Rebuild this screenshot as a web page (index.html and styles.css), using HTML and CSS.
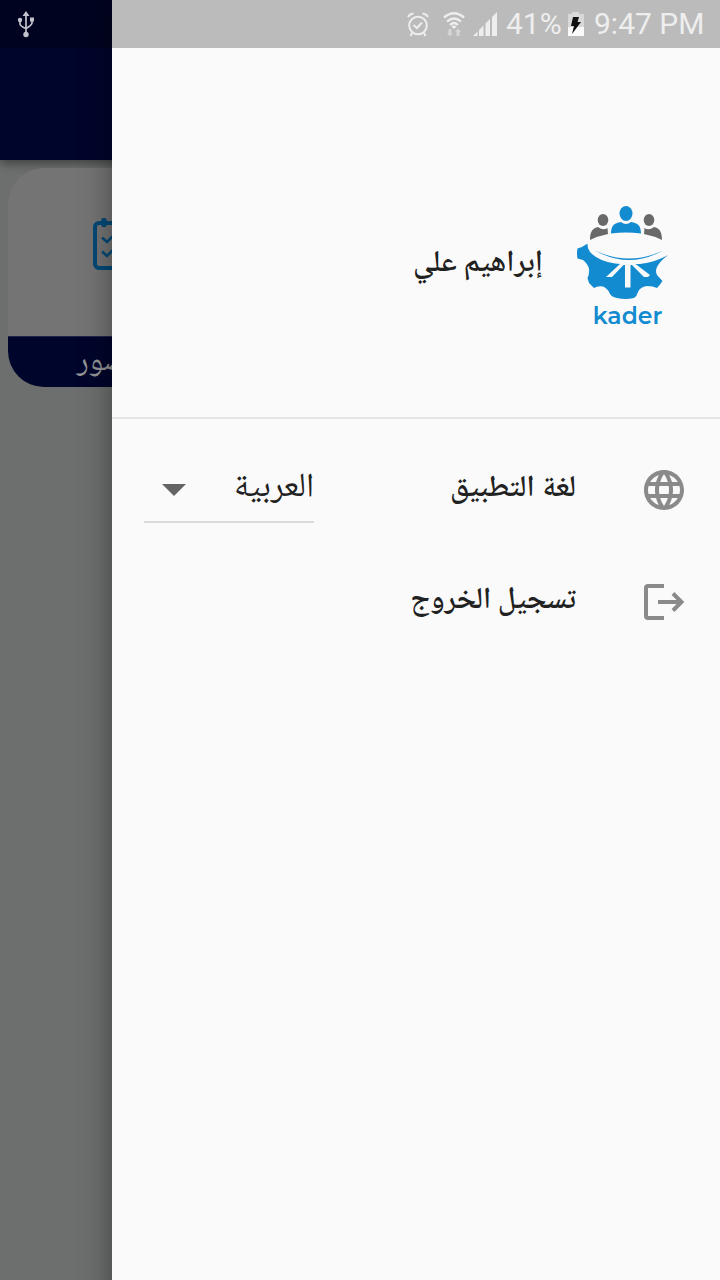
FILE: index.html
```html
<!DOCTYPE html>
<html lang="ar" dir="rtl">
<head>
<meta charset="utf-8">
<title>kader</title>
<link rel="stylesheet" href="styles.css">
</head>
<body>
<div class="screen">
  <main class="page">
    <div class="appbar"></div>
    <section class="card">
      <div class="card-body">
        <svg class="card-icon" viewBox="0 0 48 54" fill="none" stroke="#034976" stroke-width="4">
          <rect x="2" y="5" width="44" height="45" rx="4"/>
          <path d="M9 19.500l5 4.500 8-8M9 33.500l5 4.500 8-8" stroke-width="2.500"/>
          <path d="M11 2.500v4M37 2.500v4" stroke-width="5.500" stroke-linecap="round"/>
        </svg>
      </div>
      <div class="card-label"><span>الحضور</span></div>
    </section>
  </main>

  <aside class="drawer">
    <header class="profile">
      <svg class="logo" viewBox="0 0 115 140">
        <g fill="#138bd1">
          <ellipse cx="61" cy="18.500" rx="6.500" ry="7.500"/>
          <path d="M46 38.500C46 31 49 28 56 27Q61 31 66 27C73 28 76 31 76 38.500Q61 36.500 46 38.500Z"/>
          <path d="M22.500 48.500Q18 52 12.500 53.500Q11.500 58 12.500 63.500L18 65Q23 69 24 74Q24.500 79 22.500 83L24 88L29 93Q33 90.500 38 91.500Q43 94 44.500 98Q46 102 52 103Q60 105 69 103Q72 101 73 97Q75 92 82 91Q88 91 92 93Q95 90 97.500 86L92 80Q90 76 92 72Q95 66 103 60Q91 67 75 69L70.500 69L85 80L83 82H79L67 70H65.500V92.500H60V70H58.500L47 82H41L55 69L50 68.500Q33 66 25 57Q22 53 22.500 48.500Z"/>
          <path d="M30 55.500Q64 71.500 98 55.500Q64 74.500 30 55.500Z"/>
        </g>
        <g fill="#696969">
          <ellipse cx="38" cy="25" rx="5.300" ry="6"/>
          <path d="M25 45C25 36 28 33 33 32Q38 36 42.500 33L43 39Q33 41 25 45Z"/>
          <ellipse cx="84" cy="25" rx="5.300" ry="6"/>
          <path d="M97 45C97 36 94 33 89 32Q84 36 79.500 33L79 39Q89 41 97 45Z"/>
        </g>
      </svg>
      <div class="brand" dir="ltr">kader</div>
      <div class="name"><span>إبراهيم علي</span></div>
    </header>
    <nav class="menu">
      <div class="row">
        <svg class="icon" viewBox="0 0 24 24" fill="#8a8a8a"><path d="M11.990 2C6.470 2 2 6.480 2 12s4.470 10 9.990 10C17.520 22 22 17.520 22 12S17.520 2 11.990 2zm6.930 6h-2.950c-.320-1.250-.780-2.450-1.380-3.560 1.840.630 3.370 1.910 4.330 3.560zM12 4.040c.830 1.200 1.480 2.530 1.910 3.960h-3.820c.430-1.430 1.080-2.760 1.910-3.960zM4.260 14C4.100 13.360 4 12.690 4 12s.100-1.360.260-2h3.380c-.080.660-.140 1.320-.140 2s.060 1.340.140 2H4.260zm.820 2h2.950c.320 1.250.780 2.450 1.380 3.560-1.840-.630-3.370-1.900-4.330-3.560zm2.950-8H5.080c.960-1.660 2.490-2.930 4.330-3.560C8.810 5.550 8.350 6.750 8.030 8zM12 19.960c-.830-1.200-1.480-2.530-1.910-3.960h3.820c-.430 1.430-1.080 2.760-1.910 3.960zM14.340 14H9.660c-.090-.660-.160-1.320-.160-2s.070-1.350.160-2h4.680c.090.650.160 1.320.160 2s-.070 1.340-.160 2zm.250 5.560c.600-1.110 1.060-2.310 1.380-3.560h2.950c-.960 1.650-2.490 2.930-4.330 3.560zM16.360 14c.080-.660.140-1.320.140-2s-.060-1.340-.140-2h3.380c.160.640.260 1.310.260 2s-.100 1.360-.260 2h-3.380z"/></svg>
        <div class="label"><span class="language-label">لغة التطبيق</span></div>
        <div class="select">
          <span class="select-value">العربية</span>
          <svg class="arrow" viewBox="0 0 24 12"><path d="M0 0h24L12 12z" fill="#646464"/></svg>
        </div>
      </div>
      <div class="row">
        <svg class="icon" viewBox="0 0 48 48" fill="none" stroke="#8a8a8a" stroke-width="4"><path d="M24 8H8Q6 8 6 10V38Q6 40 8 40H24M18 24H41M33 15.500l8.500 8.500-8.500 8.500"/></svg>
        <div class="label"><span class="logout-label">تسجيل الخروج</span></div>
      </div>
    </nav>
  </aside>

  <div class="statusbar" dir="ltr">
    <svg class="usb" viewBox="0 0 18 28" fill="none" stroke="#c2c2ca" stroke-width="1.700">
      <path d="M9 4v20M3 10v4q0 2 6 4.500M15 10v3q0 2-6 5.500"/>
      <g fill="#c2c2ca" stroke="none"><path d="M9 1l3.500 5h-7zM13 7.500h4v4h-4z"/><circle cx="3" cy="10" r="2.200"/><circle cx="9" cy="24.500" r="2.700"/></g>
    </svg>
    <svg class="alarm" viewBox="0 0 22 25" fill="none" stroke="#eee" stroke-width="2">
      <circle cx="11" cy="13.500" r="8.800"/><path d="M1 5Q2.500 2 6.500 1.500M21 5Q19.500 2 15.500 1.500M5 21l-1.500 3M17 21l1.500 3M6.500 13l3.500 3 5-5.500"/>
    </svg>
    <svg class="wifi" viewBox="0 0 22 25" fill="none" stroke="#eee" stroke-width="2.300">
      <path d="M1 5.500Q11-3 21 5.500M4 9.500Q11 3.500 18 9.500M7 13Q11 9 15 13"/><path d="M8.300 14.500Q11 12.500 13.700 14.500L11 17z" fill="#eee" stroke="none"/>
      <path d="M5.500 17h3v4H10l-3 3.500L4 21h1.500zM13.500 24h3v-4H18l-3-3.500-3 3.500h1.500z" fill="#d6d6d6" stroke="none"/>
    </svg>
    <svg class="signal" viewBox="0 0 24 24" fill="#eee"><path d="M0 24l4.500-4.500V24zM6 24v-6l4.500-4.500V24zM12.500 24V11.500L17 7v17zM19 24V5l5-5v24z"/></svg>
    <span class="percent">41%</span>
    <svg class="battery" viewBox="0 0 16 24"><path d="M0 2h4V0h7v2h5v13H0z" fill="#d8d8d8"/><path d="M0 15h16v9H0z" fill="#fafafa"/><path d="M5 5h6L9.500 10H13L4 22l2-8H3z" fill="#111"/></svg>
    <span class="time">9:47 PM</span>
  </div>
</div>
</body>
</html>
```
FILE: styles.css
```css
* { box-sizing: border-box; }
body { margin: 0; font-family: "Noto Naskh Arabic UI", "Noto Naskh Arabic", "Noto Sans Arabic", "DejaVu Sans", sans-serif; }
.screen { position: relative; width: 720px; height: 1280px; overflow: hidden; background: #6c6f6d; }
.page { height: 100%; }
.appbar { height: 160px; background: #00052b; box-shadow: 0 3px 10px rgba(0,0,0,.45); }
.card { width: 346px; margin: 8px 366px 0 0; border-radius: 36px; overflow: hidden; height: 219px; background: #747474; }
.card-body { height: 168px; padding: 50px 213px 0 0; }
.card-icon { display: block; width: 48px; height: 54px; }
.card-label { height: 51px; background: #00052b; color: #959595; font-size: 31px; line-height: 50px; padding-right: 192px; border-top: 1px solid #202448; white-space: nowrap; }
.drawer { position: absolute; top: 0; left: 112px; width: 608px; height: 1380px; background: #fafafa; box-shadow: 0 0 30px rgba(0,0,0,.4); color: #212121; }
.profile { display: grid; grid-template-columns: 115px 1fr; grid-template-rows: 105px 35px; height: 419px; padding: 195px 40px 0 0; border-bottom: 2px solid #e5e5e5; }
.logo { grid-area: 1 / 1 / 3 / 2; width: 115px; height: 140px; }
.brand { grid-area: 2 / 1; font: 600 23.5px/32px Montserrat, "Open Sans", sans-serif; color: #138bd1; text-align: center; padding-left: 10px; }
.name { grid-area: 1 / 2 / 3 / 3; font-size: 30.2px; font-weight: 600; line-height: 138px; padding-right: 22px; white-space: nowrap; }
.menu { padding: 15px 32px 0; }
.row { display: flex; height: 112px; align-items: center; }
.icon { width: 48px; height: 48px; flex: none; }
.label { width: 262px; margin-right: 64px; font-size: 30.2px; font-weight: 600; line-height: 44px; padding-bottom: 3px; white-space: nowrap; }
.select { display: flex; width: 170px; height: 66px; border-bottom: 2px solid #dadada; justify-content: space-between; align-items: center; padding-left: 18px; font-size: 34px; line-height: 48px; }
.select-value { padding-bottom: 3px; }
.arrow { width: 24px; height: 12px; margin-top: 2px; }
.statusbar { position: absolute; inset: 0 0 auto; height: 48px; display: flex; align-items: center; background: rgba(0,0,0,.25); color: #eee; font: 30px/48px Roboto, sans-serif; padding-left: 17px; }
.usb { width: 18px; height: 28px; }
.alarm { width: 22px; height: 25px; margin-left: 372px; }
.wifi { width: 22px; height: 25px; margin-left: 14px; }
.signal { width: 24px; height: 24px; margin-left: 8px; }
.percent { width: 56px; margin-left: 9px; }
.battery { width: 16px; height: 24px; margin-left: 6px; }
.time { margin-left: 10px; white-space: nowrap; }
```
